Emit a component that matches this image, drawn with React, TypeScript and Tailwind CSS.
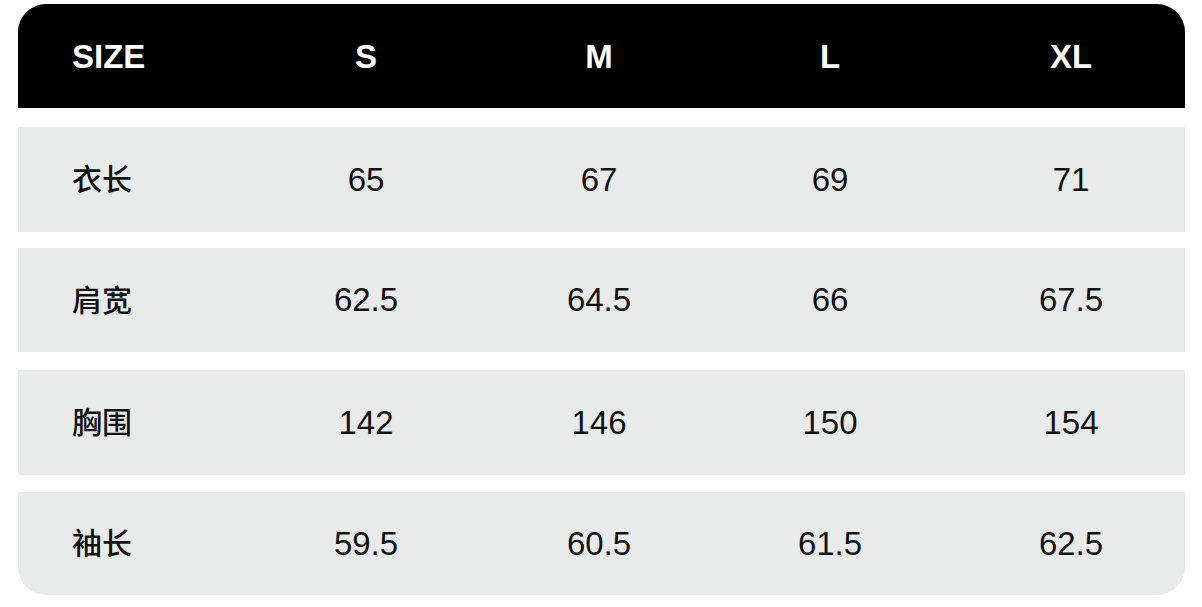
import React from "react";

const cols = ["S", "M", "L", "XL"];
const rows: [string, string[], string][] = [
  ["衣长", ["65", "67", "69", "71"], "h-[105px]"],
  ["肩宽", ["62.5", "64.5", "66", "67.5"], "h-[104px] mt-[16px]"],
  ["胸围", ["142", "146", "150", "154"], "h-[105px] mt-[18px]"],
  ["袖长", ["59.5", "60.5", "61.5", "62.5"], "h-[103px] mt-[17px]"],
];

const grid = "grid grid-cols-[219px_258px_208px_254px_1fr] items-center";

export default function App() {
  return (
    <div
      className="w-[1202px] h-[607px] bg-white pt-[4px] pl-[18px]"
      style={{ fontFamily: '"Liberation Sans", Arial, "Noto Sans CJK SC", sans-serif' }}
    >
      <div className="w-[1167px] rounded-[28px] overflow-hidden flex flex-col">
        <div className={`${grid} h-[104px] pt-[2px] bg-black text-white font-bold text-[33px]`}>
          <div className="pl-[54px]">SIZE</div>
          {cols.map((c) => (
            <div key={c} className="text-center">
              {c}
            </div>
          ))}
        </div>
        <div className="flex flex-col mt-[19px]">
          {rows.map(([label, vals, h]) => (
            <div
              key={label}
              className={`${grid} ${h} bg-[#e9ebeb] text-[#111] text-[33px]`}
            >
              <div className="pl-[54px] text-[30px] font-medium">{label}</div>
              {vals.map((v, i) => (
                <div key={i} className="text-center">
                  {v}
                </div>
              ))}
            </div>
          ))}
        </div>
      </div>
    </div>
  );
}
